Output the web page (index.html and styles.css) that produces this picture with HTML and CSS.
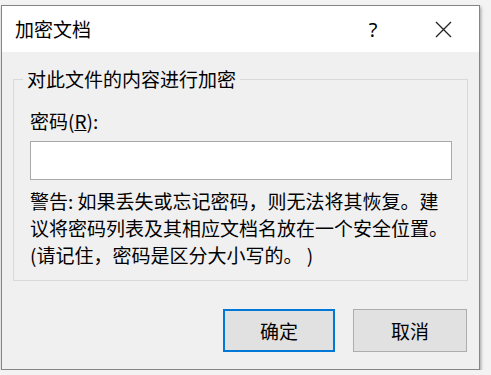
FILE: index.html
```html
<!DOCTYPE html>
<html lang="zh-CN">
<head>
<meta charset="utf-8">
<title>加密文档</title>
<link rel="stylesheet" href="styles.css">
</head>
<body>
<div class="window">
  <div class="titlebar">
    <span class="title">加密文档</span>
    <span class="help">?</span>
    <svg class="close" width="17" height="17" viewBox="0 0 17 17">
      <path d="M1 1 L16 16 M16 1 L1 16" stroke="#222" stroke-width="1.3" fill="none"/>
    </svg>
  </div>
  <div class="content">
    <div class="group">
      <span class="legend">对此文件的内容进行加密</span>
      <div class="label">密码(<u>R</u>):</div>
      <div class="input"></div>
      <p class="warning">警告: 如果丢失或忘记密码，则无法将其恢复。建议将密码列表及其相应文档名放在一个安全位置。(请记住，密码是区分大小写的。 )</p>
    </div>
    <div class="buttons">
      <div class="btn btn-default">确定</div>
      <div class="btn">取消</div>
    </div>
  </div>
</div>
</body>
</html>
```
FILE: styles.css
```css
html, body {
  margin: 0;
  padding: 0;
  background: #f3f3f3;
}
body {
  font-family: "Noto Sans CJK SC", "Noto Sans", sans-serif;
  color: #000;
  font-size: 19px;
}
.window {
  margin: 5px 0 0 1px;
  width: 479px;
  height: 365px;
  box-sizing: border-box;
  border: 1px solid #858585;
  box-shadow: 1px 2px 3px rgba(0,0,0,0.35);
  background: #f0f0f0;
  display: flex;
  flex-direction: column;
}
.titlebar {
  height: 47px;
  background: #fff;
  display: flex;
  align-items: center;
  padding-left: 13px;
}
.title {
  flex: 1;
  line-height: 26px;
}
.help {
  width: 20px;
  text-align: center;
  margin-right: 52px;
  font-family: "Noto Sans", sans-serif;
  font-size: 20px;
}
.close {
  margin-right: 27px;
}
.content {
  padding: 27px 11px 17px 11px;
  display: flex;
  flex-direction: column;
}
.group {
  position: relative;
  border: 1px solid #d9d9d9;
  padding: 28px 15px 12px 16px;
}
.legend {
  position: absolute;
  left: 9px;
  top: -14px;
  padding: 0 4px;
  background: #f0f0f0;
  line-height: 26px;
}
.label {
  line-height: 26px;
}
.input {
  margin-top: 7px;
  height: 39px;
  box-sizing: border-box;
  border: 1px solid #a9a9a9;
  background: #fff;
}
.warning {
  margin: 7px 0 0 0;
  line-height: 27px;
}
.buttons {
  margin-top: 28px;
  display: flex;
  justify-content: flex-end;
  gap: 18px;
  padding-right: 1px;
}
.btn {
  width: 114px;
  height: 43px;
  box-sizing: border-box;
  border: 1px solid #adadad;
  background: #e1e1e1;
  display: flex;
  align-items: center;
  justify-content: center;
}
.btn-default {
  width: 112px;
  border: 2px solid #0078d7;
}
```
